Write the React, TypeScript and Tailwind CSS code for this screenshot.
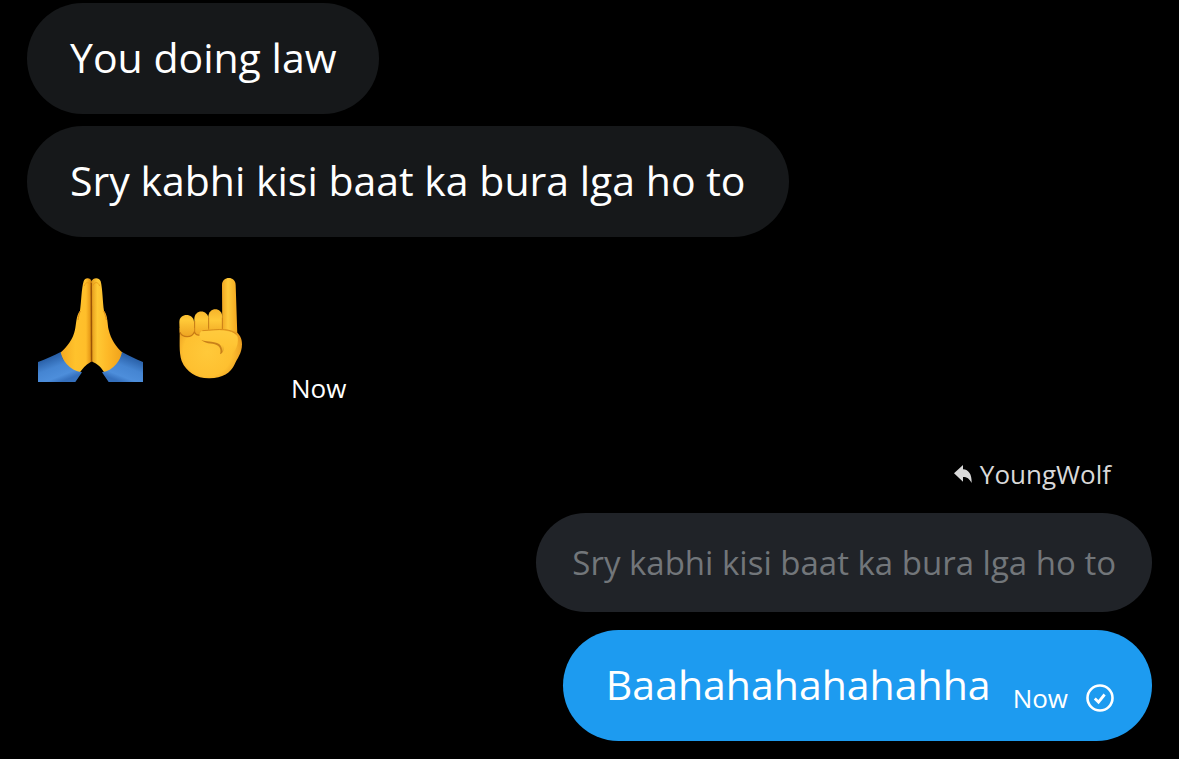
import type { ReactNode } from 'react';

const bubbleConfig = {
  received: 'bg-[#16181a] text-white text-[41px] leading-[55px] px-[43px] pt-[27px] pb-[29px]',
  quoted: 'bg-[#202328] text-[#72767a] text-[33px] leading-[47px] px-9 py-[26px]',
  sent: 'bg-[#1d9bf0] text-white text-[41px] leading-[55px] pl-[43px] pr-[38px] pt-[27px] pb-[29px]',
};

function Bubble({ kind, children }: { kind: keyof typeof bubbleConfig; children: ReactNode }) {
  return (
    <div className={`flex items-end max-w-full rounded-[56px] ${bubbleConfig[kind]}`}>
      {children}
    </div>
  );
}

function FoldedHands() {
  return (
    <svg viewBox="24 36 315 315" className="w-[105px] h-[105px]" role="img" aria-label="Folded hands">
      <defs>
        <linearGradient id="palmLeft" x1="95" y1="0" x2="186" y2="0" gradientUnits="userSpaceOnUse">
          <stop offset="0" stopColor="#f5aa20" />
          <stop offset="0.45" stopColor="#ffc22c" />
          <stop offset="0.8" stopColor="#ffbe2a" />
          <stop offset="0.93" stopColor="#e99c18" />
          <stop offset="1" stopColor="#a86008" />
        </linearGradient>
        <linearGradient id="palmRight" x1="275" y1="0" x2="184" y2="0" gradientUnits="userSpaceOnUse">
          <stop offset="0" stopColor="#f0a31c" />
          <stop offset="0.45" stopColor="#fdb827" />
          <stop offset="0.8" stopColor="#ffc934" />
          <stop offset="1" stopColor="#e39a1c" />
        </linearGradient>
        <linearGradient id="sleeveLeft" x1="60" y1="270" x2="92" y2="351" gradientUnits="userSpaceOnUse">
          <stop offset="0" stopColor="#2459a0" />
          <stop offset="0.45" stopColor="#4585d2" />
          <stop offset="0.8" stopColor="#4d8edb" />
          <stop offset="1" stopColor="#3570bd" />
        </linearGradient>
        <linearGradient id="sleeveRight" x1="304" y1="270" x2="272" y2="351" gradientUnits="userSpaceOnUse">
          <stop offset="0" stopColor="#2459a0" />
          <stop offset="0.45" stopColor="#4585d2" />
          <stop offset="0.8" stopColor="#4d8edb" />
          <stop offset="1" stopColor="#3570bd" />
        </linearGradient>
      </defs>
      <path
        d="M186 50C181 36 164 37 161 49C154 72 154 112 150 137C138 152 139 176 135 194C129 223 111 246 90 264L112 312L148 324C158 312 166 300 181 292C185 290 186 286 186 281Z"
        fill="url(#palmLeft)"
      />
      <path
        d="M184 50C189 36 208 37 212 49C218 72 218 112 222 137C234 152 232 176 236 194C243 223 258 246 279 264L258 312L224 324C216 312 208 300 190 292C186 290 184 286 184 281Z"
        fill="url(#palmRight)"
      />
      <path
        d="M163 63C167 49 178 50 181 62M189 62C193 50 204 49 209 63"
        fill="none" stroke="#e99a18" strokeWidth="2.5"
      />
      <path d="M184 53L185 290" fill="none" stroke="#9a5406" strokeWidth="4" />
      <path d="M151 138C147 147 145 155 144 165M221 138C225 147 228 155 229 165" fill="none" stroke="#d98a14" strokeWidth="3" />
      <path d="M24 291C48 283 70 272 92 261C96 284 116 316 156 322L136 351H24Z" fill="url(#sleeveLeft)" />
      <path d="M339 291C317 283 297 272 276 261C272 284 253 316 216 322L236 351H339Z" fill="url(#sleeveRight)" />
    </svg>
  );
}

function IndexPointingUp() {
  return (
    <svg viewBox="-21 36 315 315" className="w-[105px] h-[105px]" role="img" aria-label="Index pointing up">
      <defs>
        <radialGradient id="fist" cx="128" cy="260" r="112" gradientUnits="userSpaceOnUse">
          <stop offset="0" stopColor="#ffc93a" />
          <stop offset="0.65" stopColor="#fec030" />
          <stop offset="1" stopColor="#e5951c" />
        </radialGradient>
        <linearGradient id="indexFinger" x1="171" y1="0" x2="216" y2="0" gradientUnits="userSpaceOnUse">
          <stop offset="0" stopColor="#f0a722" />
          <stop offset="0.4" stopColor="#ffca3a" />
          <stop offset="1" stopColor="#f3a820" />
        </linearGradient>
        <linearGradient id="curledFinger" x1="0" y1="132" x2="0" y2="218" gradientUnits="userSpaceOnUse">
          <stop offset="0" stopColor="#f6b32a" />
          <stop offset="0.4" stopColor="#ffc938" />
          <stop offset="1" stopColor="#eda120" />
        </linearGradient>
        <linearGradient id="thumb" x1="0" y1="193" x2="0" y2="285" gradientUnits="userSpaceOnUse">
          <stop offset="0" stopColor="#ffcb3e" />
          <stop offset="0.5" stopColor="#ffc534" />
          <stop offset="1" stopColor="#fec130" stopOpacity="0" />
        </linearGradient>
      </defs>
      <path d="M171 60C171 32 212 32 212 60L217 210L172 206Z" fill="url(#indexFinger)" />
      <path
        d="M44 189C45 225 41 262 50 288C64 322 96 341 134 340C172 339 198 324 209 298C216 281 231 266 231 238C231 220 224 207 210 199L160 188Z"
        fill="url(#fist)"
      />
      <path d="M130 156C130 126 171 124 172 156V197H132Z" fill="url(#curledFinger)" />
      <path d="M88 162C88 132 129 132 131 162V198C120 216 93 211 88 202Z" fill="url(#curledFinger)" />
      <path d="M43 170C43 143 86 143 87 170V202C82 220 50 220 44 201Z" fill="url(#curledFinger)" />
      <path d="M45 202C52 219 81 220 88 201C92 209 98 212 106 210" fill="none" stroke="#c87a14" strokeWidth="3.5" />
      <path d="M131 158V194M89 168V201M172 158V192" fill="none" stroke="#cf8217" strokeWidth="3" />
      <path
        d="M109 225C125 240 148 232 160 243C167 250 168 258 165 268C178 262 181 248 172 238C158 226 128 230 109 225Z"
        fill="#c9811a"
      />
      <path
        d="M112 197C100 202 101 219 112 225C130 232 152 228 165 239C174 250 171 266 178 280C206 274 222 244 218 216C206 191 150 196 112 197Z"
        fill="url(#thumb)"
      />
      <path d="M112 197C136 196 158 192 178 194C194 195 206 200 214 208" fill="none" stroke="#d88c19" strokeWidth="3" />
    </svg>
  );
}

function ReplyIcon() {
  return (
    <svg viewBox="0 0 54 54" className="w-[18px] h-[18px]" fill="currentColor" aria-hidden="true">
      <path d="M0 25L27 0V13C44 14 54 28 53 54C46 41 39 36 27 36V50Z" />
    </svg>
  );
}

function SentIcon() {
  return (
    <svg viewBox="0 0 28 28" className="w-7 h-7" fill="none" stroke="currentColor" role="img" aria-label="Sent">
      <circle cx="14" cy="14" r="12.5" strokeWidth="2.6" />
      <path d="M8.8 14.6L12.5 18.1L18.6 10.5" strokeWidth="2.8" />
    </svg>
  );
}

export default function App() {
  return (
    <main className="min-h-screen bg-black px-[27px] pt-[3px] pb-[18px] font-['Open_Sans',sans-serif]">
      {/* Received messages */}
      <section className="flex flex-col items-start gap-3">
        <Bubble kind="received">
          <p>You doing law</p>
        </Bubble>
        <Bubble kind="received">
          <p>Sry kabhi kisi baat ka bura lga ho to</p>
        </Bubble>
        <div className="flex items-end pl-[11px] pt-7">
          <div className="flex gap-[15px] pb-6">
            <FoldedHands />
            <IndexPointingUp />
          </div>
          <time className="ml-7 text-[26px] leading-9 text-white">Now</time>
        </div>
      </section>

      {/* Sent reply */}
      <section className="flex flex-col items-end pt-[50px]">
        <div className="flex items-center gap-2 pr-[41px] text-[26px] leading-9 text-[#d9d9d9]">
          <ReplyIcon />
          <span>YoungWolf</span>
        </div>
        <div className="flex flex-col items-end gap-[18px] pt-[21px]">
          <Bubble kind="quoted">
            <p>Sry kabhi kisi baat ka bura lga ho to</p>
          </Bubble>
          <Bubble kind="sent">
            <p>Baahahahahahahha</p>
            <div className="flex items-center gap-[18px] ml-[22px] -mb-1 text-[26px] leading-9">
              <time>Now</time>
              <SentIcon />
            </div>
          </Bubble>
        </div>
      </section>
    </main>
  );
}
